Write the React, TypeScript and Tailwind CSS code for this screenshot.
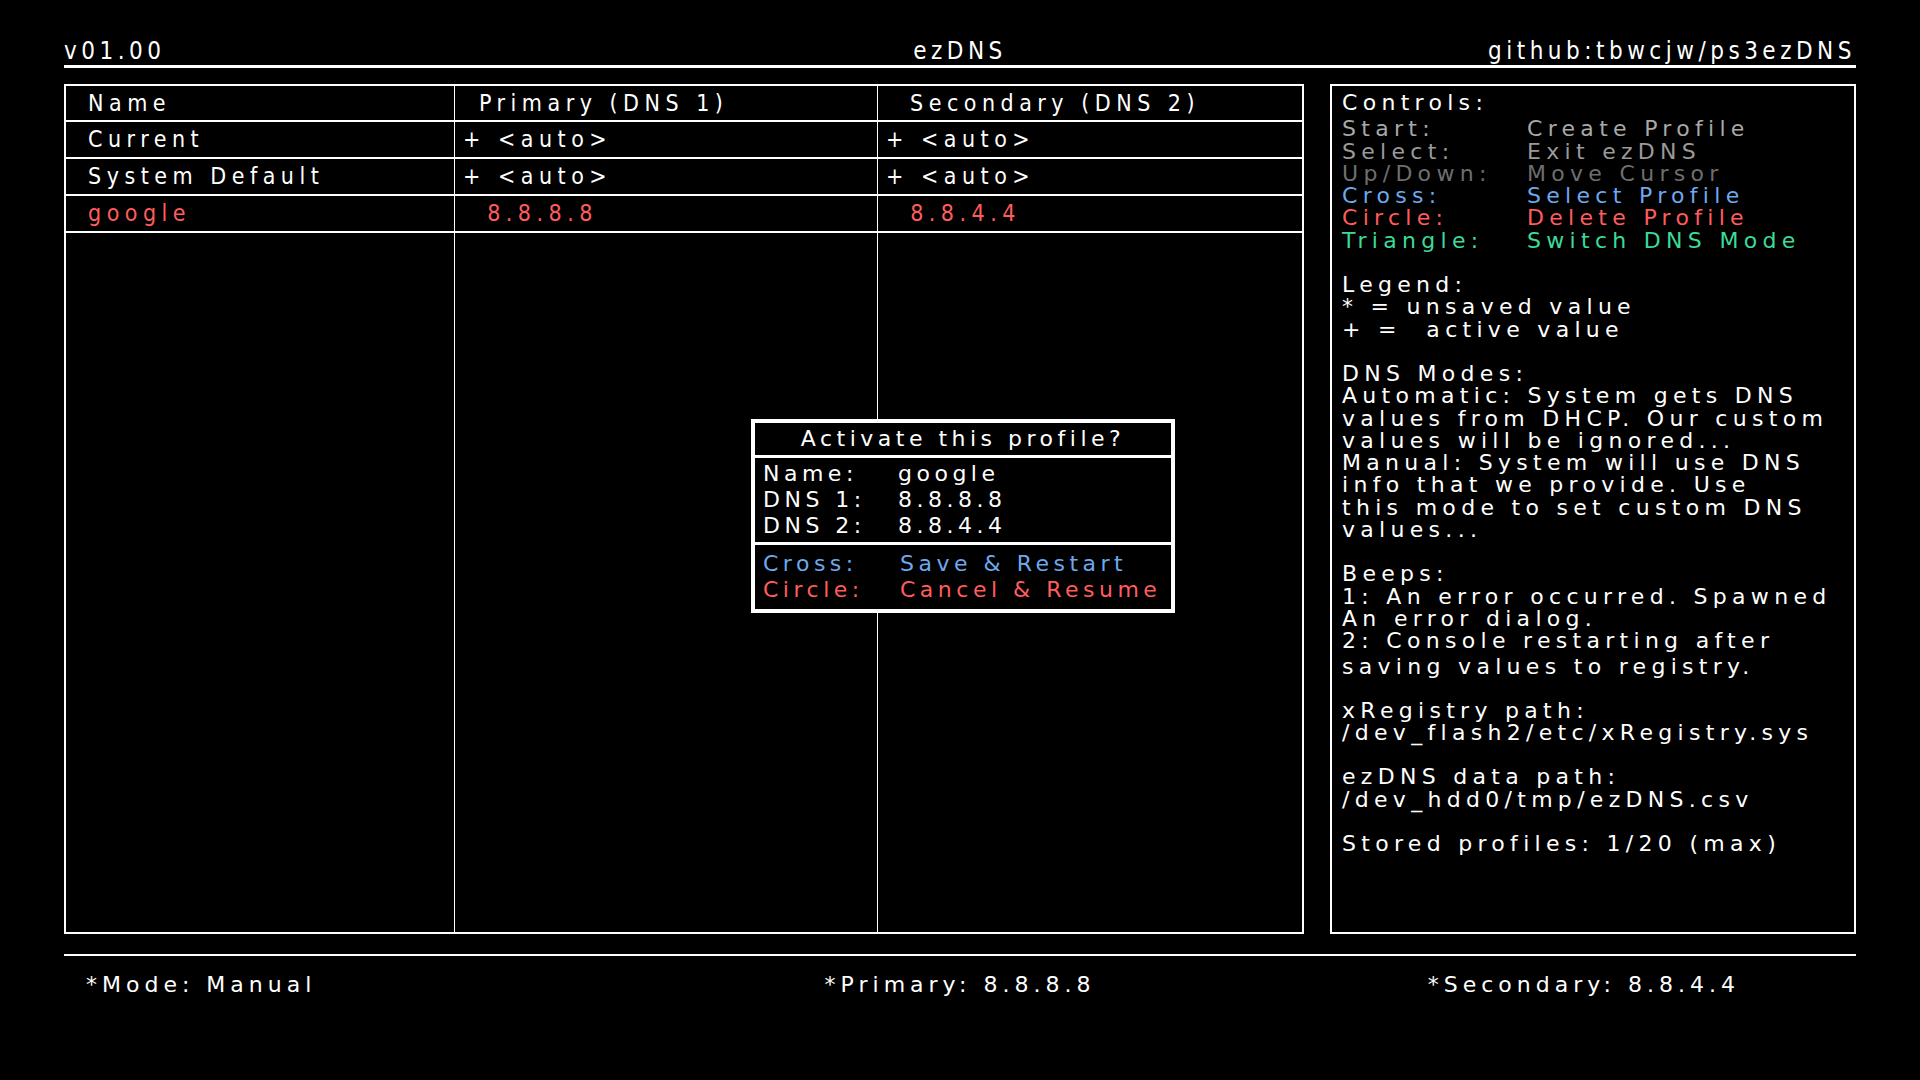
import React from 'react';

const F = { fontFamily: '"DejaVu Sans", "Liberation Sans", sans-serif' };
const FC = { fontFamily: '"DejaVu Sans Condensed", "DejaVu Sans", sans-serif' };

const rows = [
  { name: 'Current', p: '+ <auto>', s: '+ <auto>', red: false },
  { name: 'System Default', p: '+ <auto>', s: '+ <auto>', red: false },
  { name: 'google', p: '  8.8.8.8', s: '  8.8.4.4', red: true },
];

const controls = [
  ['Start:', 'Create Profile', 'text-[#a8a8a8]'],
  ['Select:', 'Exit ezDNS', 'text-[#9a9a9a]'],
  ['Up/Down:', 'Move Cursor', 'text-[#6e6e6e]'],
  ['Cross:', 'Select Profile', 'text-[#6ea8ee]'],
  ['Circle:', 'Delete Profile', 'text-[#ff5c5c]'],
  ['Triangle:', 'Switch DNS Mode', 'text-[#3bdb98]'],
];

export default function App() {
  return (
    <div className="w-[1920px] h-[1080px] bg-black text-white overflow-hidden" style={F}>
      <div className="mx-[64px] pt-[38px] grid grid-cols-3 items-end text-[24px] leading-[26px] tracking-[4.5px] border-b-[3px] border-white pb-[1px]" style={FC}>
        <span>v01.00</span>
        <span className="text-center">ezDNS</span>
        <span className="text-right">github:tbwcjw/ps3ezDNS</span>
      </div>

      <div className="mx-[64px] mt-[16px] flex gap-[26px] h-[850px]">
        <div className="relative w-[1240px] border-2 border-white flex flex-col text-[23px] tracking-[5.5px]" style={FC}>
          <div className="grid grid-cols-[389px_423px_1fr] h-[36px] border-b-2 border-white">
            <div className="pl-[22px] flex items-center border-r border-white">Name</div>
            <div className="pl-[24px] flex items-center border-r border-white">Primary (DNS 1)</div>
            <div className="pl-[32px] flex items-center">Secondary (DNS 2)</div>
          </div>
          {rows.map((r) => (
            <div key={r.name} className={`grid grid-cols-[389px_423px_1fr] h-[37px] border-b-2 border-white ${r.red ? 'text-[#ff5c5c]' : ''}`}>
              <div className="pl-[22px] flex items-center border-r border-white">{r.name}</div>
              <div className="pl-[8px] flex items-center border-r border-white whitespace-pre">{r.p}</div>
              <div className="pl-[8px] flex items-center whitespace-pre">{r.s}</div>
            </div>
          ))}
          <div className="grid grid-cols-[389px_423px_1fr] flex-1">
            <div className="border-r border-white" />
            <div className="border-r border-white" />
            <div />
          </div>

          <div className="absolute left-[685px] top-[333px] w-[424px] border-[4px] border-white bg-black text-[22px] tracking-[4.5px] leading-[26px]" style={F}>
            <div className="text-center py-[3px] border-b-[3px] border-white">Activate this profile?</div>
            <div className="px-[8px] py-[3px] border-b-[3px] border-white">
              <div className="flex"><span className="w-[135px]">Name:</span>google</div>
              <div className="flex"><span className="w-[135px]">DNS 1:</span>8.8.8.8</div>
              <div className="flex"><span className="w-[135px]">DNS 2:</span>8.8.4.4</div>
            </div>
            <div className="px-[8px] py-[6px]">
              <div className="flex text-[#6ea8ee]"><span className="w-[137px]">Cross:</span>Save &amp; Restart</div>
              <div className="flex text-[#ff5c5c]"><span className="w-[137px]">Circle:</span>Cancel &amp; Resume</div>
            </div>
          </div>
        </div>

        <div className="flex-1 border-2 border-white px-[10px] pt-[6px] text-[22px] leading-[22.3px] tracking-[5.3px] whitespace-pre">
          <div>Controls:</div>
          {controls.map(([a, b, c], i) => (
            <div key={a} className={`flex ${c} ${i === 0 ? 'mt-[4px]' : ''}`}><span className="w-[185px]">{a}</span>{b}</div>
          ))}
          <div className="mt-[22px]">Legend:</div>
          <div>* = unsaved value</div>
          <div>+ =  active value</div>
          <div className="mt-[22px]">DNS Modes:</div>
          <div>Automatic: System gets DNS</div>
          <div>values from DHCP. Our custom</div>
          <div>values will be ignored...</div>
          <div>Manual: System will use DNS</div>
          <div>info that we provide. Use</div>
          <div>this mode to set custom DNS</div>
          <div>values...</div>
          <div className="mt-[22px]">Beeps:</div>
          <div>1: An error occurred. Spawned</div>
          <div>An error dialog.</div>
          <div>2: Console restarting after</div>
          <div className="mt-[3px]">saving values to registry.</div>
          <div className="mt-[22px]">xRegistry path:</div>
          <div>/dev_flash2/etc/xRegistry.sys</div>
          <div className="mt-[22px]">ezDNS data path:</div>
          <div>/dev_hdd0/tmp/ezDNS.csv</div>
          <div className="mt-[22px]">Stored profiles: 1/20 (max)</div>
        </div>
      </div>

      <div className="mx-[64px] mt-[20px] border-t-2 border-white grid grid-cols-3 pt-[12px] text-[22px] tracking-[5px] whitespace-pre">
        <span className="pl-[22px]">*Mode: Manual</span>
        <span className="text-center">*Primary: 8.8.8.8</span>
        <span className="text-right pr-[116px]">*Secondary: 8.8.4.4</span>
      </div>
    </div>
  );
}
